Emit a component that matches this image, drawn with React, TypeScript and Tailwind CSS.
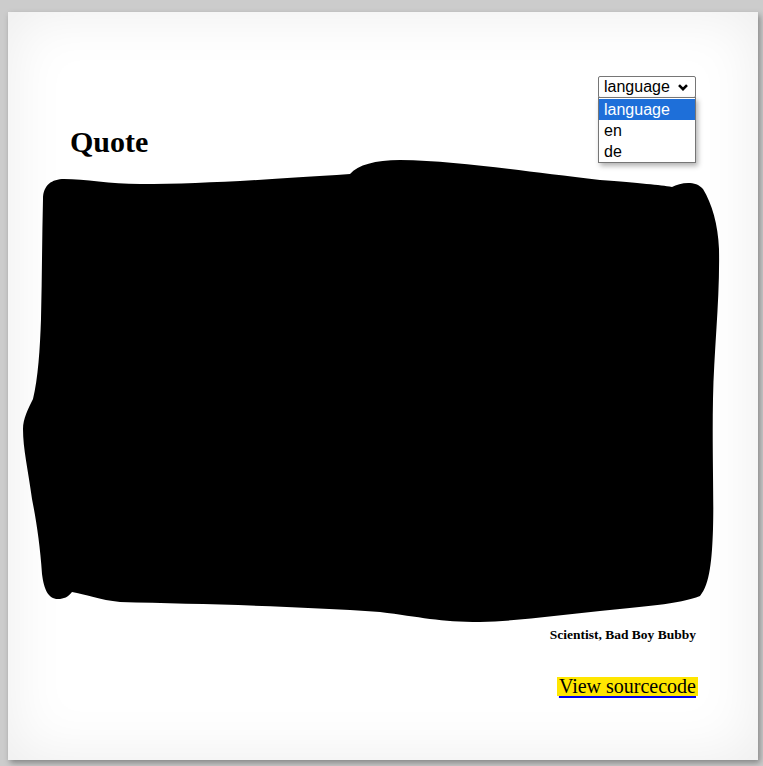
import React from 'react';

const options = ['language', 'en', 'de'];

// Fake open <select>, native popups can't be photographed
const LanguageSelect: React.FC = () => {
  return (
    <div className="relative w-[98px] h-[22px] font-['Liberation_Sans',Arial,sans-serif] text-[16px] text-black">
      <div className="h-full border border-[#767676] rounded-[2px] bg-white flex items-center pl-[5px] pr-[7px]">
        <span className="leading-[20px]">language</span>
        <svg className="ml-auto" width="10" height="7" viewBox="0 0 10 7">
          <polyline points="1,1.2 5,5.2 9,1.2" fill="none" stroke="#000" strokeWidth="2.6" />
        </svg>
      </div>
      <div className="absolute left-0 top-[21px] w-[98px] border border-[#767676] bg-white pt-[1px] shadow-[2px_3px_5px_rgba(0,0,0,0.3)] z-10">
        {options.map((opt, i) => (
          <div
            key={opt}
            className={`h-[21px] leading-[21px] pl-[5px] ${i === 0 ? 'bg-[#1e6fd9] text-white' : ''}`}
          >
            {opt}
          </div>
        ))}
      </div>
    </div>
  );
};

const App: React.FC = () => {
  return (
    <div className="min-h-screen bg-[#cccccc] pl-[8px] pt-[12px] font-['Liberation_Serif','Times_New_Roman',serif] text-black">
      <div className="w-[750px] h-[748px] bg-white px-[62px] pt-[64px] shadow-[inset_0_0_60px_rgba(0,0,0,0.08),2px_3px_6px_rgba(0,0,0,0.35)]">
        <div className="flex justify-end">
          <LanguageSelect />
        </div>

        <h1 className="mt-[29px] text-[30px] leading-[30px] font-bold">Quote</h1>

        {/* redacted quote */}
        <svg className="block -ml-[50px]" width="702" height="468" viewBox="20 158 702 468">
          <path
            fill="#000"
            d="M43 200
               C43 186 52 180 64 180
               C85 180 110 185 140 185
               C200 185 260 181 350 175
               C358 166 375 161 400 161
               C460 162 520 172 600 181
               C640 184 660 186 672 188
               C680 184 695 181 703 190
               C712 205 718 225 719 250
               C720 300 714 350 713 400
               C712 450 714 500 713 530
               C712 560 710 585 700 597
               C680 605 640 608 600 612
               C560 616 520 622 480 623
               C440 623 420 618 380 613
               C300 607 200 605 120 603
               C100 601 85 595 72 593
               C68 598 64 600 58 600
               C48 600 44 590 42 575
               C40 545 36 520 32 500
               C28 470 23 450 23 430
               C23 420 28 410 33 400
               C38 380 40 350 41 320
               C42 280 42 240 43 200 Z"
          />
        </svg>

        <p className="mt-[2px] text-right text-[13.5px] leading-[15px] font-bold">Scientist, Bad Boy Bubby</p>

        <div className="mt-[34px] text-right">
          <a
            href="#"
            className="inline-block -mr-[2px] px-[2px] text-[20px] leading-[19px] bg-[#ffe600] text-black underline [text-decoration-color:#0000ee] [text-decoration-thickness:2px] underline-offset-[3px]"
          >
            View sourcecode
          </a>
        </div>
      </div>
    </div>
  );
};

export default App;
